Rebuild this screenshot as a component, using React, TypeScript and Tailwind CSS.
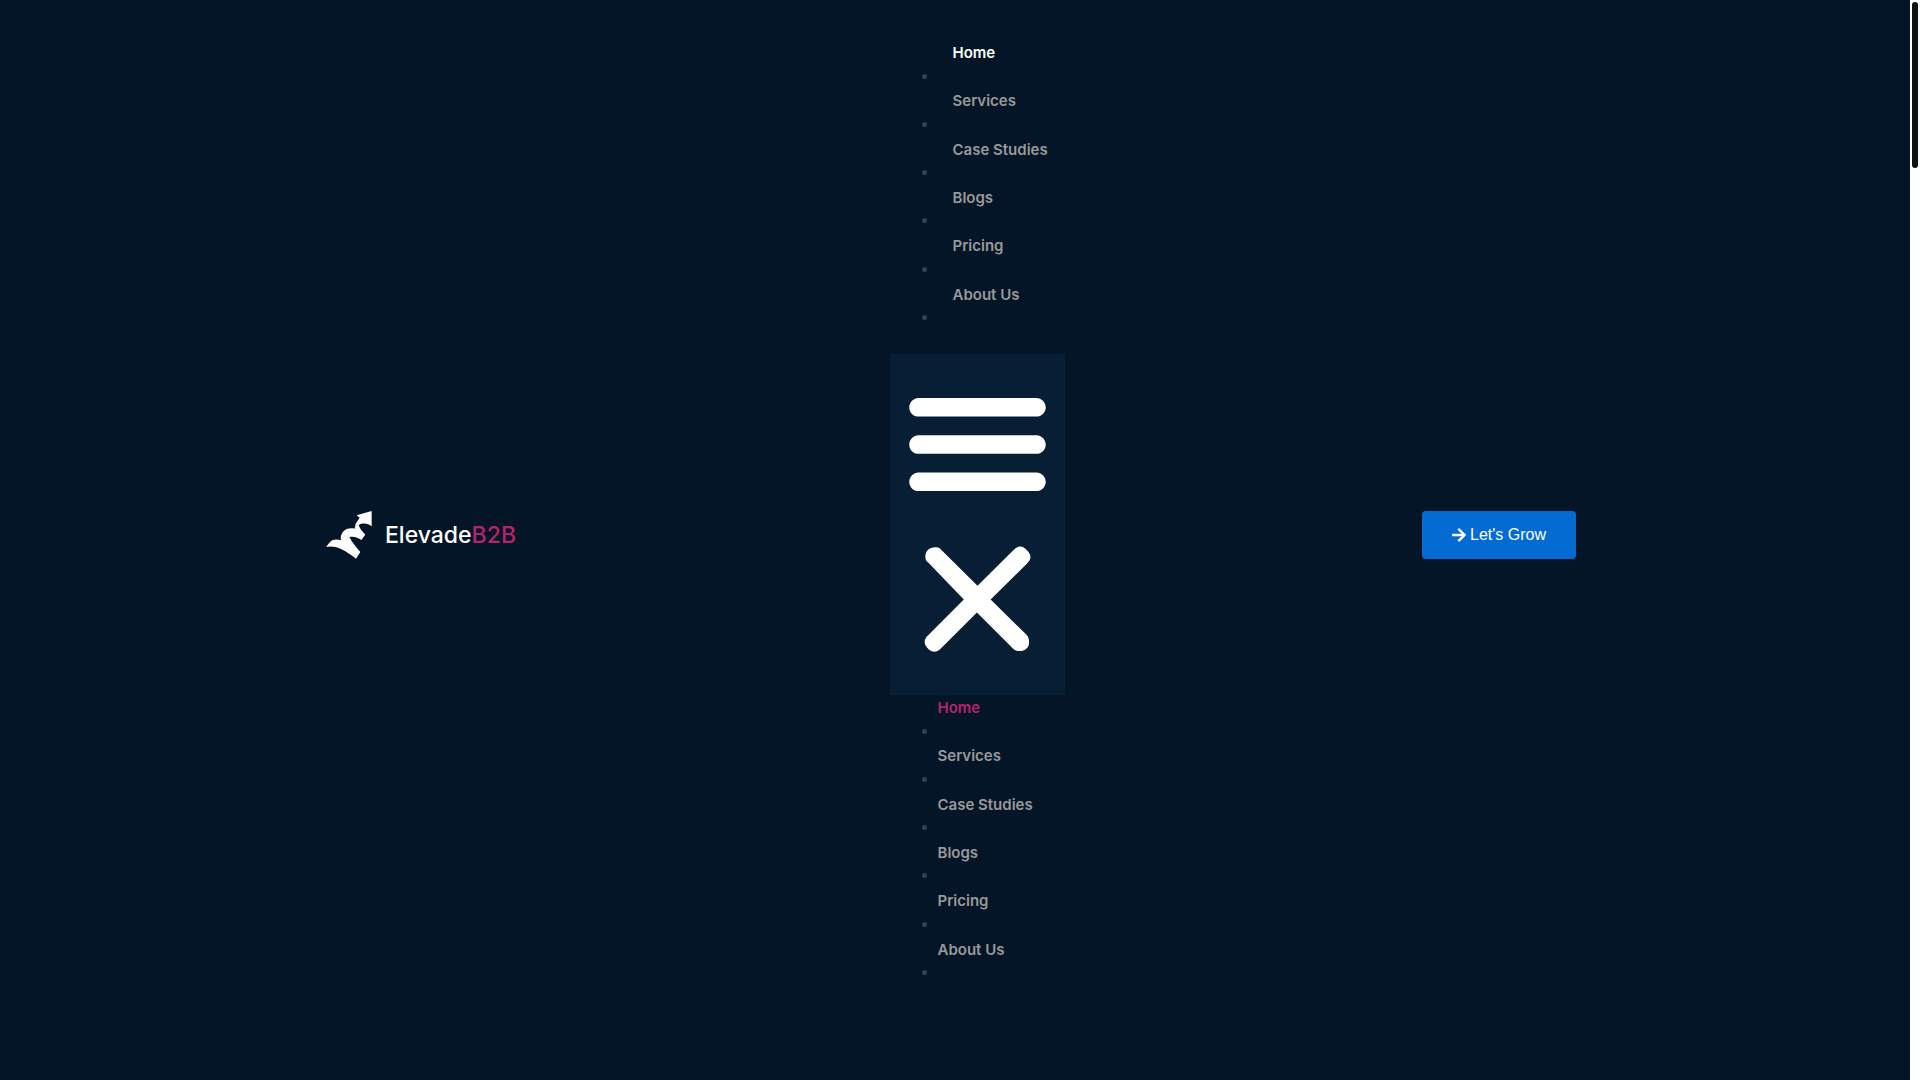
import { FaArrowRight } from 'react-icons/fa';
import clsx from 'clsx';

const LINKS = ['Home', 'Services', 'Case Studies', 'Blogs', 'Pricing', 'About Us'];

function Logo() {
  return (
    <a href="#" aria-label="ElevadeB2B" className="flex items-center gap-3 pr-4">
      <svg viewBox="18 18 141 144" className="h-[48px] w-[47px] fill-white" aria-hidden="true">
        <path d="M155 18L110 31L119 38L107 56L104 71C90 68 77 71 69 80C63 88 61 96 63 106C51 102 38 103 31 110C26 115 22 120 19 126C32 122 47 125 61 131C78 138 93 149 108 161L121 141C110 129 97 113 88 96C101 93 114 97 124 105L136 89C127 80 119 70 116 60C130 52 145 56 155 64Z" />
        <path
          d="M63 106C66 96 76 89 88 96M104 71C106 63 110 60 116 60"
          className="fill-none stroke-[#c9ced4] stroke-1"
        />
      </svg>
      <span className="text-[23px] leading-8 font-medium text-white">
        Elevade<span className="text-[#b5246b]">B2B</span>
      </span>
    </a>
  );
}

interface MenuListProps {
  label: string;
  activeClass: string;
  linkClass: string;
}

function MenuList({ label, activeClass, linkClass }: MenuListProps) {
  return (
    <ul aria-label={label} className="grid min-h-[290px]">
      {LINKS.map((link, i) => (
        <li key={link}>
          <a
            href="#"
            className={clsx(
              'block text-[15px] leading-[26px] font-semibold whitespace-nowrap',
              linkClass,
              i === 0 ? activeClass : 'text-[#999999]'
            )}
          >
            {link}
          </a>
          <div className="flex h-5 items-center pl-8">
            <span className="size-[5px] rounded-full bg-[#334155]" />
          </div>
        </li>
      ))}
    </ul>
  );
}

function MenuToggle() {
  return (
    <button
      type="button"
      aria-label="Menu Toggle"
      className="flex flex-col items-center gap-[9px] bg-[#081e35] px-3 pt-[13px] pb-[21px]"
    >
      <svg viewBox="0 0 1000 1000" className="size-[149px] fill-white">
        <path d="M104 333H896C929 333 958 304 958 271S929 208 896 208H104C71 208 42 237 42 271S71 333 104 333ZM104 583H896C929 583 958 554 958 521S929 458 896 458H104C71 458 42 487 42 521S71 583 104 583ZM104 833H896C929 833 958 804 958 771S929 708 896 708H104C71 708 42 737 42 771S71 833 104 833Z" />
      </svg>
      <svg viewBox="0 0 1000 1000" className="size-[149px] fill-white">
        <path d="M742 167L500 408 258 167C246 154 233 150 217 150 196 150 179 158 167 167 154 179 150 196 150 212 150 229 154 242 171 254L408 500 167 742C138 771 138 800 167 829 196 858 225 858 254 829L496 587 738 829C750 842 767 846 783 846 800 846 817 842 829 829 842 817 846 804 846 783 846 767 842 750 829 737L588 500 833 258C863 229 863 200 833 171 804 137 775 137 742 167Z" />
      </svg>
    </button>
  );
}

export default function App() {
  return (
    <div className="flex min-h-screen bg-[#041527] font-['Inter','Liberation_Sans',sans-serif]">
      <div className="min-w-0 flex-1">
        <header className="mx-auto flex max-w-[1258px] items-center justify-between pt-10 pr-2">
          <Logo />
          <nav className="flex w-[175px] flex-col pb-11">
            <MenuList label="Main menu" activeClass="text-white" linkClass="pl-[63px]" />
            <div className="mt-6 flex flex-col">
              <MenuToggle />
            </div>
            <MenuList label="Dropdown menu" activeClass="text-[#b5246b]" linkClass="pl-12" />
          </nav>
          <a
            href="#"
            className="flex h-12 items-center gap-1 rounded-[4px] bg-[#046bd2] px-[30px] font-['Liberation_Sans',Arial,sans-serif] text-base text-white"
          >
            <FaArrowRight className="w-3.5" />
            Let's Grow
          </a>
        </header>
      </div>
      {/* Scroll track */}
      <div className="w-[10px] shrink-0 bg-white p-0.5">
        <div className="h-[166px] rounded-full bg-[#111111]" />
      </div>
    </div>
  );
}
